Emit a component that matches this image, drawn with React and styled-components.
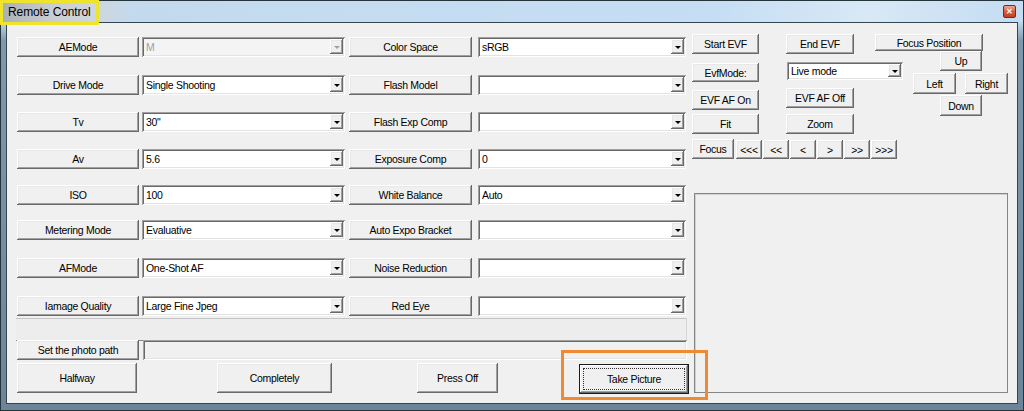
import React from "react";
import styled, { createGlobalStyle, css } from "styled-components";

const Global = createGlobalStyle`
  html, body { margin: 0; padding: 0; background: #fff; }
  body { width: 1024px; height: 411px; overflow: hidden; font-family: "Liberation Sans", Arial, sans-serif; }
  *, *::before, *::after { box-sizing: border-box; }
`;

const Window = styled.div`
  position: relative;
  width: 1024px;
  height: 411px;
  border: 1px solid #23343b;
  background: linear-gradient(180deg, #c4dbef 0px, #c4dbef 20px, #7f98ab 40px, #6c8598 100%);
  display: flex;
  flex-direction: column;
`;

const TitleBar = styled.div`
  height: 21px;
  flex: none;
  display: flex;
  align-items: center;
  padding: 0 7px 0 7px;
  background: linear-gradient(90deg, #a9b0b4 0%, #c9cdd0 5%, #cfd6dc 9%, #c3daee 13%, #c6def4 70%, #d8e8f6 85%, #c4dcf2 100%);
`;

const Title = styled.span`
  font-size: 12px;
  color: #000;
  letter-spacing: -0.1px;
  margin-top: 1px;
`;

const CloseBtn = styled.div`
  margin-left: auto;
  width: 13px;
  height: 13px;
  border-radius: 2px;
  border: 1px solid #7a2a1a;
  background: linear-gradient(180deg, #f0a58e 0%, #d95d40 50%, #c2401f 100%);
  display: flex;
  align-items: center;
  justify-content: center;
  color: #fff;
  font-size: 8px;
  font-weight: bold;
  line-height: 1;
`;

const Client = styled.div`
  flex: 1;
  margin: 0 5px 6px 5px;
  border: 1px solid #34464f;
  background: #f0f0f0;
  padding: 11px 0 0 10px;
  display: flex;
  gap: 2px;
  min-height: 0;
`;

const LeftForm = styled.div`
  width: 672px;
  flex: none;
  padding-top: 3px;
  display: flex;
  flex-direction: column;
`;

const ParamRow = styled.div`
  display: flex;
  height: 20px;
  margin-top: ${(p) => p.$gap}px;
`;

const raised = css`
  background: #f0f0f0;
  box-shadow: inset -1px -1px #696969, inset 1px 1px #ffffff, inset -2px -2px #a0a0a0, inset 2px 2px #e8e8e8;
`;

const Button = styled.div`
  ${raised}
  position: relative;
  flex: none;
  width: ${(p) => p.$w}px;
  height: ${(p) => p.$h || 20}px;
  margin-left: ${(p) => p.$ml || 0}px;
  margin-top: ${(p) => p.$mt || 0}px;
  display: flex;
  align-items: center;
  justify-content: center;
  font-size: 10.5px;
  letter-spacing: -0.3px;
  color: #000;
  white-space: nowrap;
  ${(p) =>
    p.$primary &&
    css`
      box-shadow: inset 0 0 0 1px #1a1a1a, inset -2px -2px #696969, inset 2px 2px #ffffff, inset -3px -3px #a0a0a0;
      &::after {
        content: "";
        position: absolute;
        inset: 4px;
        border: 1px dotted #333;
      }
    `}
`;

const sunken = css`
  box-shadow: inset 1px 1px #a0a0a0, inset -1px -1px #ffffff, inset 2px 2px #696969, inset -2px -2px #e3e3e3;
`;

const Combo = styled.div`
  ${sunken}
  flex: none;
  width: ${(p) => p.$w}px;
  height: ${(p) => p.$h || 20}px;
  margin-left: ${(p) => p.$ml || 0}px;
  background: ${(p) => (p.$disabled ? "#f4f4f4" : "#fff")};
  display: flex;
  align-items: center;
  padding: 2px 2px 3px 4px;
`;

const ComboText = styled.span`
  flex: 1;
  font-size: 10.5px;
  letter-spacing: -0.3px;
  color: ${(p) => (p.$disabled ? "#a0a0a0" : "#000")};
  white-space: nowrap;
  overflow: hidden;
`;

const Arrow = styled.div`
  ${raised}
  flex: none;
  width: 13px;
  align-self: stretch;
  display: flex;
  align-items: center;
  justify-content: center;
  &::before {
    content: "";
    border-left: 3px solid transparent;
    border-right: 3px solid transparent;
    border-top: 3px solid ${(p) => (p.$disabled ? "#a0a0a0" : "#000")};
    margin-top: 1px;
  }
`;

const GrayBar = styled.div`
  margin-top: 2px;
  width: 671px;
  height: 23px;
  margin-left: -1px;
  border-top: 1px solid #c4c4c4;
  border-bottom: 1px solid #8a8a8a;
  border-right: 1px solid #d6d6d6;
  background: #ededed;
`;

const PathRow = styled.div`
  display: flex;
  height: 20px;
  margin-top: -1px;
  gap: 4px;
`;

const PathField = styled.div`
  ${sunken}
  width: 544px;
  height: 20px;
  background: #f0f0f0;
`;

const BottomRow = styled.div`
  display: flex;
  margin-top: 3px;
`;

const RightPanel = styled.div`
  display: flex;
  flex-direction: column;
`;

const TopArea = styled.div`
  display: flex;
`;

const EvfGroup = styled.div`
  width: 184px;
  flex: none;
  display: flex;
  flex-direction: column;
`;

const EvfRow = styled.div`
  display: flex;
  align-items: flex-start;
  margin-top: ${(p) => p.$gap || 0}px;
  gap: ${(p) => p.$spacing || 0}px;
`;

const FocusGroup = styled.div`
  display: flex;
  flex-direction: column;
  align-items: flex-start;
`;

const PadRow = styled.div`
  display: flex;
  gap: 9px;
  margin-left: 38px;
  margin-top: 2px;
`;

const PictureBox = styled.div`
  margin-top: 34px;
  margin-left: 3px;
  width: 314px;
  height: 200px;
  border: 1px solid #858585;
  box-shadow: inset 1px 1px 0 #d0d0d0;
  background: #f0f0f0;
`;

const Annotation = styled.div`
  position: absolute;
  left: ${(p) => p.$x}px;
  top: ${(p) => p.$y}px;
  width: ${(p) => p.$w}px;
  height: ${(p) => p.$h}px;
  border: 3px solid ${(p) => p.$color};
  pointer-events: none;
`;

const rows = [
  { gap: 0, l: "AEMode", lv: "M", disabled: true, r: "Color Space", rv: "sRGB" },
  { gap: 18, l: "Drive Mode", lv: "Single Shooting", r: "Flash Model", rv: "" },
  { gap: 17, l: "Tv", lv: '30"', r: "Flash Exp Comp", rv: "" },
  { gap: 17, l: "Av", lv: "5.6", r: "Exposure Comp", rv: "0" },
  { gap: 16, l: "ISO", lv: "100", r: "White Balance", rv: "Auto" },
  { gap: 15, l: "Metering Mode", lv: "Evaluative", r: "Auto Expo Bracket", rv: "" },
  { gap: 18, l: "AFMode", lv: "One-Shot AF", r: "Noise Reduction", rv: "" },
  { gap: 18, l: "Iamage Quality", lv: "Large Fine Jpeg", r: "Red Eye", rv: "" },
];

function Select({ value, w, h, ml, disabled }) {
  return (
    <Combo $w={w} $h={h} $ml={ml} $disabled={disabled}>
      <ComboText $disabled={disabled}>{value}</ComboText>
      <Arrow $disabled={disabled} />
    </Combo>
  );
}

const arrows = ["<<<", "<<", "<", ">", ">>", ">>>"];

export default function App() {
  return (
    <>
      <Global />
      <Window>
        <TitleBar>
          <Title>Remote Control</Title>
          <CloseBtn>✕</CloseBtn>
        </TitleBar>
        <Client>
          <LeftForm>
            {rows.map((r) => (
              <ParamRow key={r.l} $gap={r.gap}>
                <Button $w={122}>{r.l}</Button>
                <Select value={r.lv} w={203} ml={3} disabled={r.disabled} />
                <Button $w={123} $ml={4}>{r.r}</Button>
                <Select value={r.rv} w={208} ml={6} />
              </ParamRow>
            ))}
            <GrayBar />
            <PathRow>
              <Button $w={122}>Set the photo path</Button>
              <PathField />
            </PathRow>
            <BottomRow>
              <Button $w={120} $h={30}>Halfway</Button>
              <Button $w={115} $h={30} $ml={80}>Completely</Button>
              <Button $w={81} $h={30} $ml={85}>Press Off</Button>
              <Button $w={110} $h={30} $ml={81} $mt={1} $primary>Take Picture</Button>
            </BottomRow>
          </LeftForm>
          <RightPanel>
            <TopArea>
              <EvfGroup>
                <EvfRow $spacing={27}>
                  <Button $w={67} $ml={1}>Start EVF</Button>
                  <Button $w={68}>End EVF</Button>
                </EvfRow>
                <EvfRow $gap={8} $spacing={28}>
                  <Button $w={67} $h={19} $ml={1} $mt={1}>EvfMode:</Button>
                  <Select value="Live mode" w={116} h={18} />
                </EvfRow>
                <EvfRow $gap={6} $spacing={27}>
                  <Button $w={67} $ml={1} $mt={2}>EVF AF On</Button>
                  <Button $w={68}>EVF AF Off</Button>
                </EvfRow>
                <EvfRow $gap={4} $spacing={27}>
                  <Button $w={67} $ml={1}>Fit</Button>
                  <Button $w={68}>Zoom</Button>
                </EvfRow>
                <EvfRow $gap={5} $spacing={1}>
                  <Button $w={42} $ml={1} $mr={1}>Focus</Button>
                  {arrows.map((a, i) => (
                    <Button key={a} $w={26} $h={19} $mt={1} $ml={i === 0 ? 1 : 0}>{a}</Button>
                  ))}
                </EvfRow>
              </EvfGroup>
              <FocusGroup>
                <Button $w={108} $h={17}>Focus Position</Button>
                <Button $w={42} $ml={65}>Up</Button>
                <PadRow>
                  <Button $w={43} $h={21}>Left</Button>
                  <Button $w={43} $h={21}>Right</Button>
                </PadRow>
                <Button $w={42} $h={21} $ml={65} $mt={1}>Down</Button>
              </FocusGroup>
            </TopArea>
            <PictureBox />
          </RightPanel>
        </Client>
        <Annotation $x={-1} $y={-1} $w={99} $h={25} $color="#efe42c" />
        <Annotation $x={560} $y={349} $w={147} $h={50} $color="#ef8a33" />
      </Window>
    </>
  );
}
